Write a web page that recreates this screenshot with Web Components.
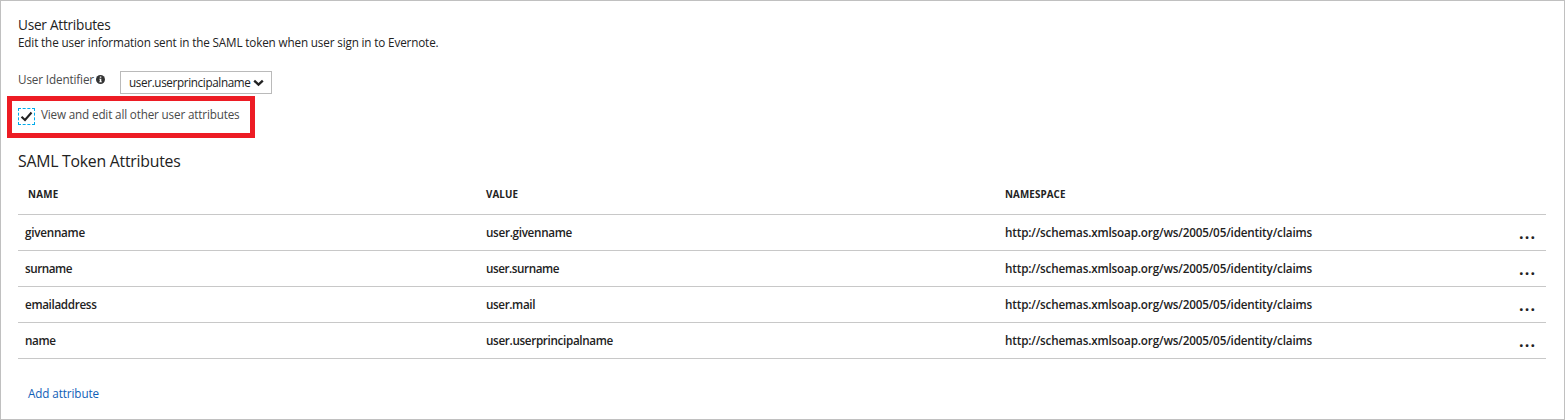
<!DOCTYPE html>
<html lang="en"><head><meta charset="utf-8"><title>User Attributes</title>
<style>html,body{margin:0;background:#fff}body{font-family:"Open Sans","Noto Sans",sans-serif}</style></head>
<body>
<attributes-panel></attributes-panel>
<script>
// Single-line label whose tracking is adjusted to the width given in "w".
class UiText extends HTMLElement{
 constructor(){super();this.attachShadow({mode:'open'}).innerHTML=`<style>:host{display:block;white-space:nowrap;font-size:11.7px;line-height:16px;height:18px}span{display:inline-block}</style><span><slot></slot></span>`;}
 connectedCallback(){const w=+this.getAttribute('w'),s=this.shadowRoot.querySelector('span'),n=this.textContent.length;
  if(w)s.style.letterSpacing=((w-s.getBoundingClientRect().width)/n).toFixed(4)+'px';}
}
class InfoIcon extends HTMLElement{
 constructor(){super();this.attachShadow({mode:'open'}).innerHTML=`<style>:host{display:block;width:9px;height:9px}svg{display:block}</style><svg width="9" height="9" viewBox="0 0 9 9"><circle cx="4.5" cy="4.5" r="4.5" fill="#333"/><path d="M3.8 1.5h1.5v1.3H3.8zM3.3 3.7h2v2.7h.6v.9H3.2v-.9h.6V4.6h-.5z" fill="#fff"/></svg>`;}
}
class SelectBox extends HTMLElement{
 constructor(){super();this.attachShadow({mode:'open'}).innerHTML=`<style>:host{display:flex;box-sizing:border-box;width:152px;height:23px;border:1px solid #bababa;padding:2px 0 0 8px;color:#222}svg{display:block;margin:5px 0 0 2px}</style><slot></slot><svg width="11" height="8" viewBox="0 0 11 8"><path d="M1.2 1.6 5.5 5.7 9.8 1.6" fill="none" stroke="#222" stroke-width="2.3"/></svg>`;}
}
class CheckField extends HTMLElement{
 constructor(){super();this.attachShadow({mode:'open'}).innerHTML=`<style>:host{display:flex;box-sizing:border-box;width:248px;height:42px;border:5px solid #ed1c24;padding:7px 0 0 6px;color:#4a4a4a}i{display:block;box-sizing:border-box;width:17px;height:17px;border:1px dashed #00abec;margin-right:6px}svg{display:block}::slotted(*){margin-top:-2px}</style><i><svg width="15" height="15" viewBox="0 0 15 15"><path d="M2.5 7.7 6 10.9 12.5 3.5" fill="none" stroke="#222" stroke-width="2.1"/></svg></i><slot></slot>`;}
}
class AttributeRow extends HTMLElement{
 constructor(){super();this.attachShadow({mode:'open'}).innerHTML=`<style>:host{display:grid;grid-template-columns:461px 519px 514px 1fr;box-sizing:border-box;height:36px;border-bottom:1px solid #c8c8c8;padding:9px 0 0 7px;color:#222;font-weight:600}b{font:700 16px/18px "Open Sans",sans-serif;letter-spacing:1.2px;color:#222}</style><slot></slot><b>...</b>`;}
}
class HeaderRow extends HTMLElement{
 constructor(){super();this.attachShadow({mode:'open'}).innerHTML=`<style>:host{display:grid;grid-template-columns:458px 519px 1fr;box-sizing:border-box;height:40px;border-bottom:1px solid #c8c8c8;padding:12px 0 0 10px;color:#222;font-weight:700}::slotted(*){font-size:9.8px}</style><slot></slot>`;}
}
class AttributesPanel extends HTMLElement{
 constructor(){super();const ns='http://schemas.xmlsoap.org/ws/2005/05/identity/claims';
 const rows=[['givenname',60,'user.givenname',86],['surname',47,'user.surname',73],['emailaddress',71.5,'user.mail',49],['name',30.5,'user.userprincipalname',127]];
 this.attachShadow({mode:'open'}).innerHTML=`<style>
 :host{display:flex;flex-direction:column;box-sizing:border-box;width:1565px;height:420px;border:1px solid #c0c0c0;padding:15px 18px 0 17px;color:#222;overflow:hidden}
 .title{font-size:13.6px;line-height:18px}
 .id{display:flex;height:25px;margin-top:18px}.id>ui-text{color:#4a4a4a;margin-top:1px}
 info-icon{margin:5px 0 0 1.5px}select-box{margin:1px 0 0 15.5px}
 check-field{margin:1px 0 0 -11px}
 .h2{font-size:15.8px;height:22px;line-height:22px;margin-top:12px}
 header-row{margin-top:3px}.add{color:#1160b7;margin:26px 0 0 10px}
 </style>
 <ui-text class="title" w="92.5">User Attributes</ui-text>
 <ui-text class="desc" w="420.5">Edit the user information sent in the SAML token when user sign in to Evernote.</ui-text>
 <div class="id"><ui-text w="76">User Identifier</ui-text><info-icon></info-icon><select-box><ui-text w="121.5">user.userprincipalname</ui-text></select-box></div>
 <check-field><ui-text w="198.5">View and edit all other user attributes</ui-text></check-field>
 <ui-text class="h2" w="162.5">SAML Token Attributes</ui-text>
 <header-row><ui-text w="30.5">NAME</ui-text><ui-text w="32">VALUE</ui-text><ui-text w="60.5">NAMESPACE</ui-text></header-row>
 ${rows.map(r=>`<attribute-row><ui-text w="${r[1]}">${r[0]}</ui-text><ui-text w="${r[3]}">${r[2]}</ui-text><ui-text w="307">${ns}</ui-text></attribute-row>`).join('')}
 <ui-text class="add" w="71">Add attribute</ui-text>`;}
}
customElements.define('info-icon',InfoIcon);customElements.define('select-box',SelectBox);customElements.define('check-field',CheckField);
customElements.define('attribute-row',AttributeRow);customElements.define('header-row',HeaderRow);customElements.define('attributes-panel',AttributesPanel);
customElements.define('ui-text',UiText);
</script></body></html>
